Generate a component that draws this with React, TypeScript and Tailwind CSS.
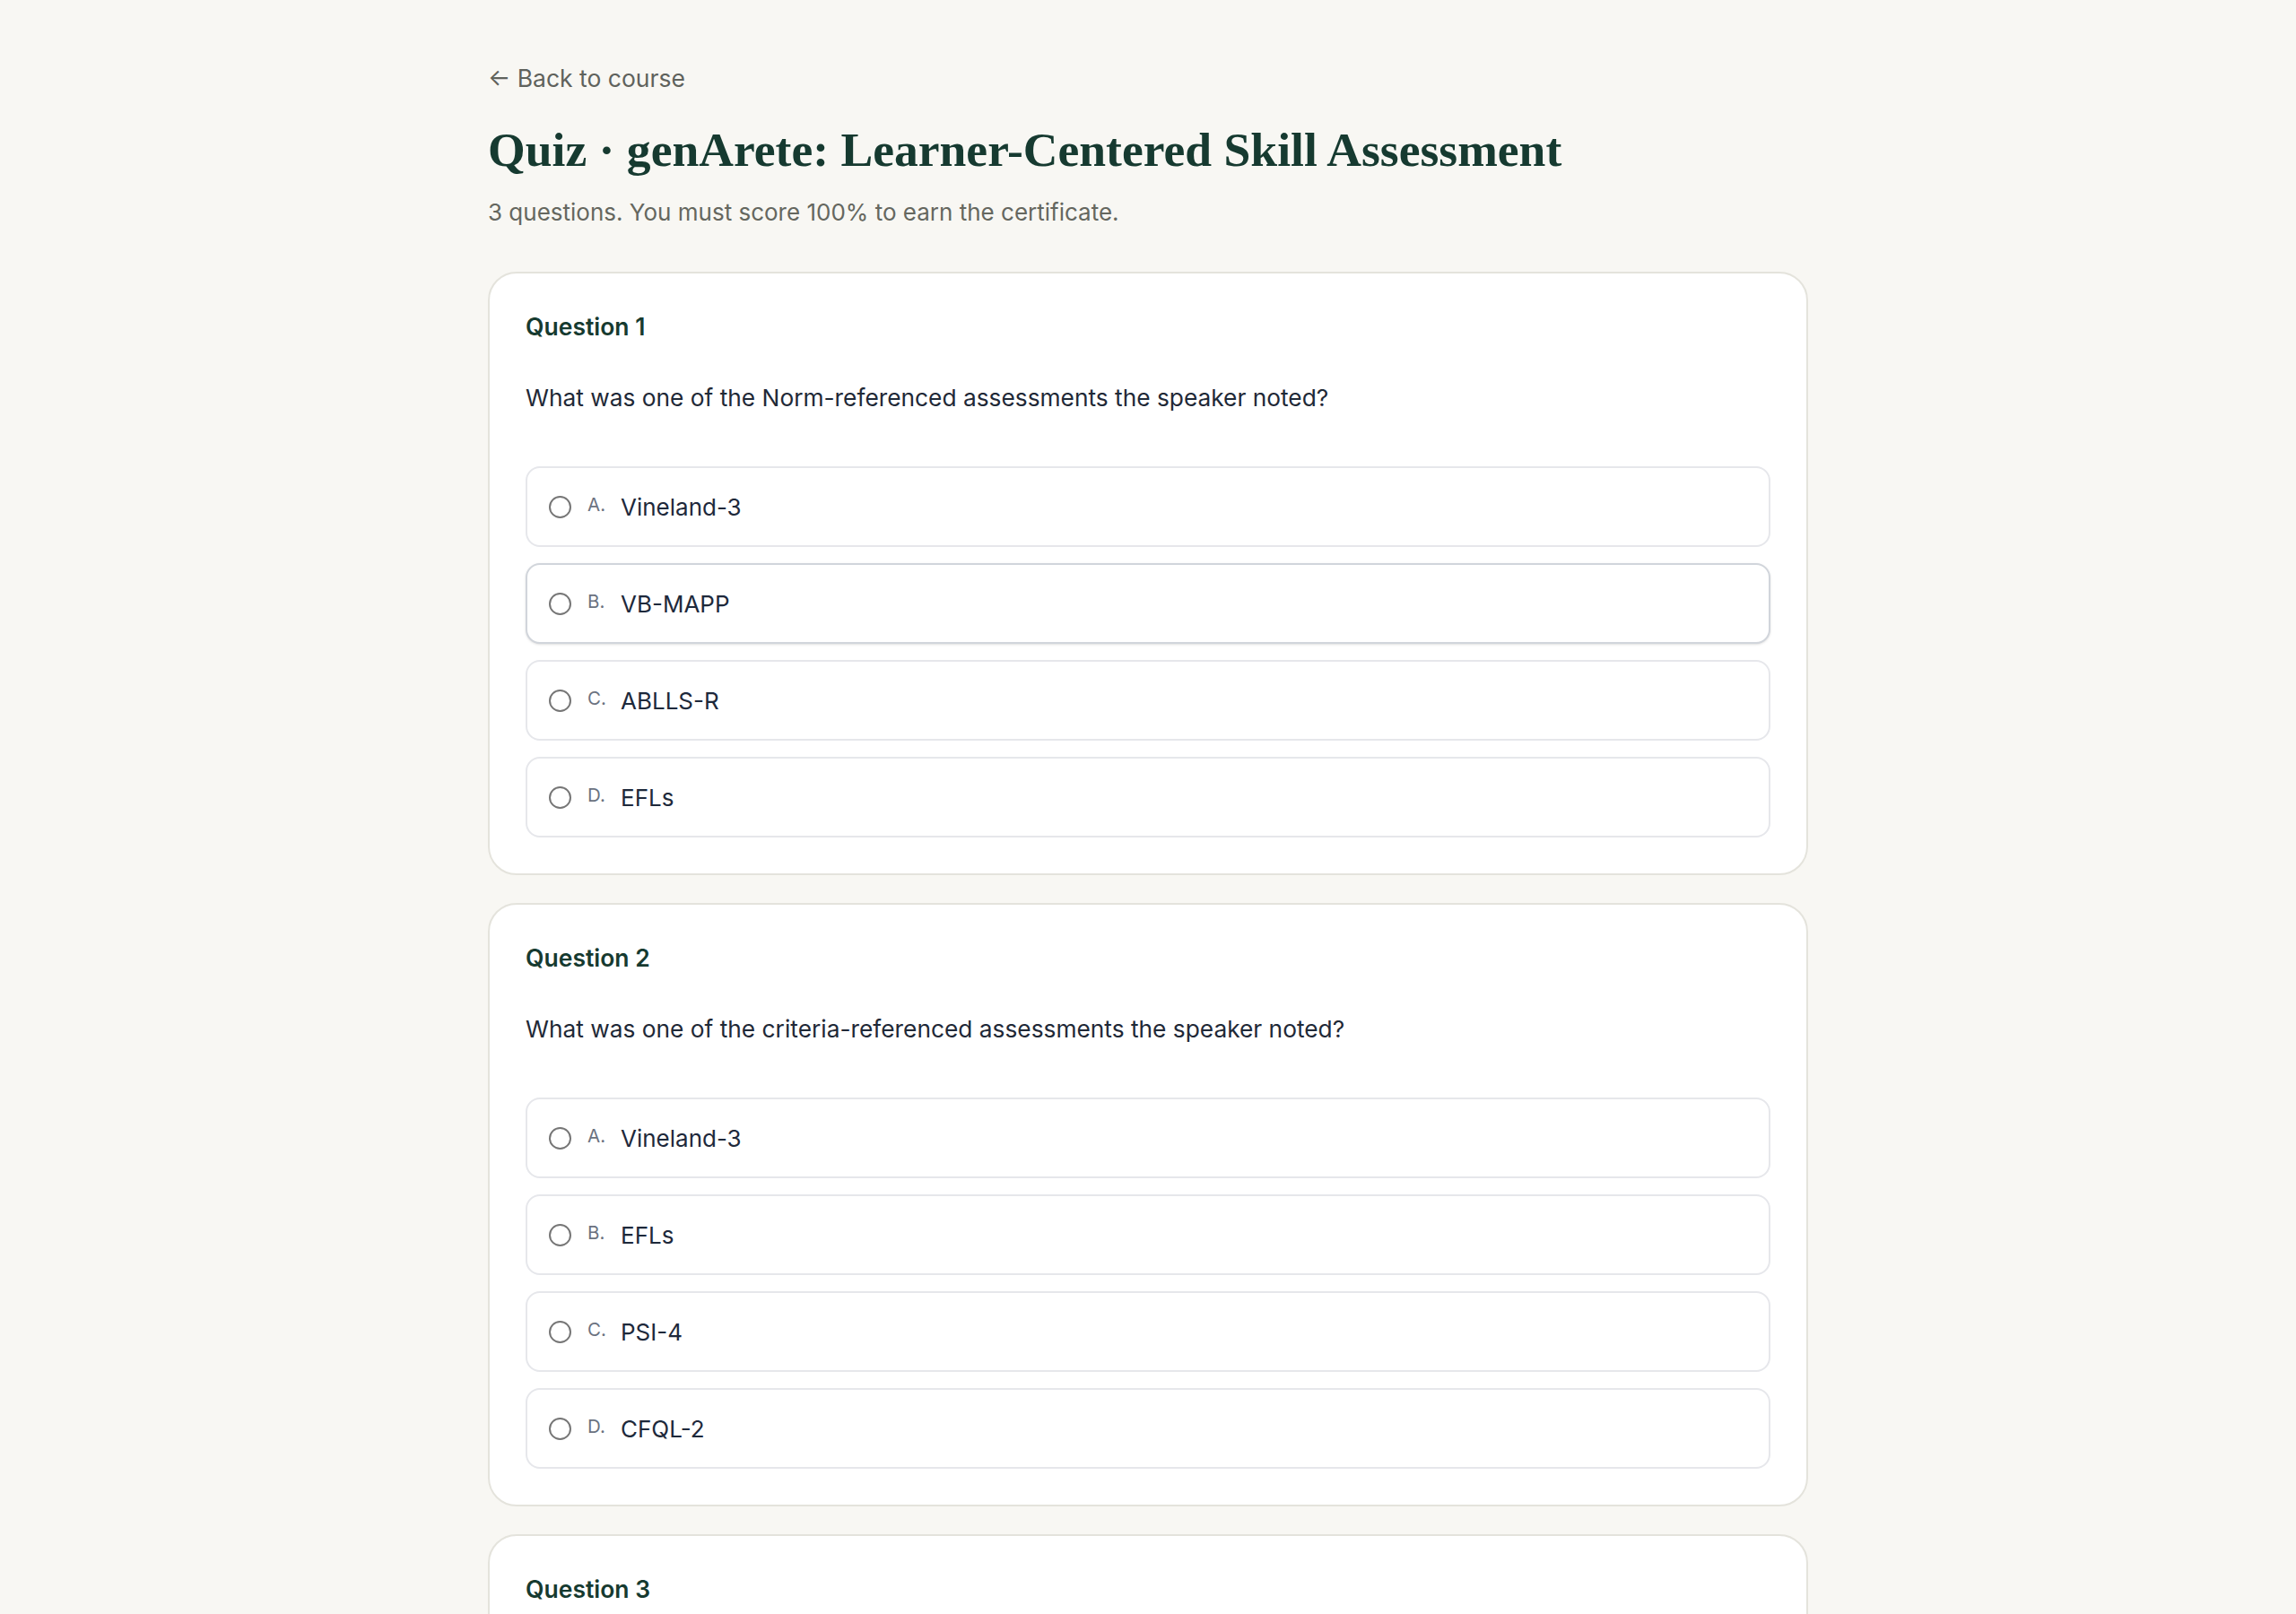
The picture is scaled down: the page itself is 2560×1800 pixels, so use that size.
import { useState } from 'react';

type Question = {
  id: number;
  prompt: string;
  options: string[];
};

const questions: Question[] = [
  {
    id: 1,
    prompt: 'What was one of the Norm-referenced assessments the speaker noted?',
    options: ['Vineland-3', 'VB-MAPP', 'ABLLS-R', 'EFLs'],
  },
  {
    id: 2,
    prompt: 'What was one of the criteria-referenced assessments the speaker noted?',
    options: ['Vineland-3', 'EFLs', 'PSI-4', 'CFQL-2'],
  },
  {
    id: 3,
    prompt: 'Which assessment did the speaker describe as measuring parent stress?',
    options: ['PSI-4', 'ABLLS-R', 'VB-MAPP', 'Vineland-3'],
  },
];

const letters = ['A', 'B', 'C', 'D'];

export default function App() {
  const [answers, setAnswers] = useState<Record<number, number>>({});
  const hovered = { q: 1, o: 1 };

  return (
    <div
      className="h-screen overflow-y-auto bg-[#f8f7f3] text-[#1e293b]"
      style={{ fontFamily: 'Inter, "Noto Sans", sans-serif' }}
    >
      <div className="mx-auto w-[1472px] pt-[68px] pb-[64px]">
        {/* Header */}
        <a href="#" className="block text-[26.5px] leading-[39px] text-[#5f625c]">
          ← Back to course
        </a>
        <h1
          className="mt-[28px] text-[53.6px] leading-[64px] font-bold text-[#163a30]"
          style={{ fontFamily: '"Liberation Serif", serif' }}
        >
          Quiz · genArete: Learner-Centered Skill Assessment
        </h1>
        <p className="mt-[18px] text-[26px] leading-[39px] text-[#65675f]">
          3 questions. You must score 100% to earn the certificate.
        </p>

        {/* Questions */}
        <div className="mt-[47px] flex flex-col gap-[31px]">
          {questions.map((q) => (
            <div
              key={q.id}
              className="rounded-[32px] border-2 border-[#e4e3dc] bg-white px-[40px] pt-[40px] pb-[40px]"
            >
              <div className="text-[26.5px] leading-[39px] font-semibold text-[#163a30]">
                Question {q.id}
              </div>
              <div className="mt-[40px] text-[26.3px] leading-[40px] text-[#1f2937]">{q.prompt}</div>
              <div className="mt-[56px] flex flex-col gap-[18px]">
                {q.options.map((opt, i) => {
                  const isHover = hovered.q === q.id && hovered.o === i;
                  const selected = answers[q.id] === i;
                  return (
                    <button
                      key={opt}
                      onClick={() => setAnswers({ ...answers, [q.id]: i })}
                      className={`flex h-[90px] items-start rounded-[16px] border-2 bg-white px-[24px] pt-[24px] text-left ${
                        isHover ? 'border-[#d1d5db] shadow-sm' : 'border-[#e6e7eb]'
                      }`}
                    >
                      <span
                        className={`mt-[7px] h-[25px] w-[25px] shrink-0 rounded-full border-2 ${
                          selected ? 'border-[#163a30] bg-[#163a30]' : 'border-[#767676]'
                        }`}
                      />
                      <span className="ml-[18px] mt-[3px] w-[37px] shrink-0 text-[20.5px] leading-[28px] text-[#6b7280]">
                        {letters[i]}.
                      </span>
                      <span className="text-[26px] leading-[39px] text-[#1e293b]">{opt}</span>
                    </button>
                  );
                })}
              </div>
            </div>
          ))}
        </div>
      </div>
    </div>
  );
}
